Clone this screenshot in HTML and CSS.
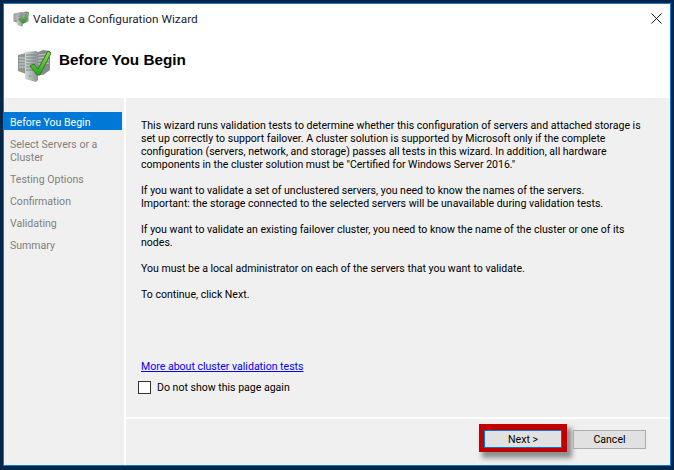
FILE: index.html
```html
<!DOCTYPE html>
<html lang="en">
<head>
<meta charset="utf-8">
<title>Validate a Configuration Wizard</title>
<link rel="stylesheet" href="styles.css">
</head>
<body>
<svg class="defs" width="0" height="0">
  <defs>
    <linearGradient id="chk" x1="0" y1="0" x2="0" y2="1"><stop offset="0" stop-color="#8ee04e"/><stop offset="1" stop-color="#2f9f22"/></linearGradient>
    <linearGradient id="tower" x1="0" y1="0" x2="1" y2="0"><stop offset="0" stop-color="#d2d6d6"/><stop offset="1" stop-color="#8b9191"/></linearGradient>
    <symbol id="servers" viewBox="0 0 34 32">
      <path d="M1 5l8-2v21l-8-3z" fill="#8f9595"/>
      <path d="M2 8h6M2 11h6M2 14h6M2 17h6" stroke="#cfd3d3" stroke-width="1.100"/>
      <path d="M19 3l7-3 7 1v19l-7 5-7-1z" fill="#868c8c"/>
      <path d="M21 5l11-1M21 8l11-1M21 11l11-1M21 14l11-1" stroke="#c5c9c9" stroke-width="1.100"/>
      <path d="M8 2l11-1 2 1v28l-2 2-11-3z" fill="url(#tower)"/>
      <path d="M9 5h10M9 8h10M9 11h10M9 14h10M9 17h10M9 20h10" stroke="#7b8181" stroke-width="1.100"/>
      <path d="M12 26h2M4 21h2" stroke="#57c23a" stroke-width="1.500"/>
      <path d="M13 16l4-2 4 5L31 1l3 2-11 22h-3z" fill="url(#chk)" stroke="#2c7d1e" stroke-width="1"/>
    </symbol>
  </defs>
</svg>
<div class="window">
  <div class="titlebar">
    <svg class="title-icon" width="16" height="16"><use href="#servers"/></svg>
    <span class="title-text">Validate a Configuration Wizard</span>
    <svg class="close" width="11" height="11" viewBox="0 0 11 11"><path d="M.5.5l10 10M10.500.5l-10 10" stroke="#1a1a1a" stroke-width="1" fill="none"/></svg>
  </div>
  <header class="banner">
    <svg class="banner-icon" width="34" height="32"><use href="#servers"/></svg>
    <h1 class="banner-title">Before You Begin</h1>
  </header>
  <div class="middle">
    <nav class="steps">
      <div class="step active">Before You Begin</div>
      <div class="step">Select Servers or a Cluster</div>
      <div class="step">Testing Options</div>
      <div class="step">Confirmation</div>
      <div class="step">Validating</div>
      <div class="step">Summary</div>
    </nav>
    <div class="panel">
      <main class="content">
        <div class="copy">
          <p>This wizard runs validation tests to determine whether this configuration of servers and attached storage is<br>set up correctly to support failover. A cluster solution is supported by Microsoft only if the complete<br>configuration (servers, network, and storage) passes all tests in this wizard. In addition, all hardware<br>components in the cluster solution must be "Certified for Windows Server 2016."</p>
          <p>If you want to validate a set of unclustered servers, you need to know the names of the servers.<br>Important: the storage connected to the selected servers will be unavailable during validation tests.</p>
          <p>If you want to validate an existing failover cluster, you need to know the name of the cluster or one of its<br>nodes.</p>
          <p>You must be a local administrator on each of the servers that you want to validate.</p>
          <p>To continue, click Next.</p>
        </div>
        <a class="more" href="#">More about cluster validation tests</a>
        <label class="check"><span class="box"></span>Do not show this page again</label>
      </main>
      <footer class="actions">
        <span class="highlight"><button class="btn next">Next &gt;</button></span>
        <button class="btn">Cancel</button>
      </footer>
    </div>
  </div>
</div>
</body>
</html>
```
FILE: styles.css
```css
html, body { margin: 0; padding: 0; }
body {
  width: 674px; height: 470px; overflow: hidden; box-sizing: border-box;
  background: #04264a; padding: 3px 3px 4px 3px;
  font-family: Roboto, "Open Sans", sans-serif; font-size: 10.550px; color: #000;
}
.defs { position: absolute; }
.window {
  height: 100%; box-sizing: border-box; border: 1px solid #1379c8; background: #fff;
  display: flex; flex-direction: column;
}
.titlebar { height: 29px; display: flex; align-items: center; padding: 0 8px 0 9px; flex: none; }
.title-icon { margin-right: 4px; }
.title-text { font-size: 11.800px; color: #1c2430; flex: 1; }
.banner { height: 65px; flex: none; display: flex; align-items: flex-start; padding-left: 13px; box-sizing: border-box; }
.banner-icon { margin-top: 17px; }
.banner-title { margin: 18px 0 0 8px; font: bold 15.300px "Liberation Sans", Arial, sans-serif; color: #000; }
.middle { flex: 1; display: flex; min-height: 0; }
.steps { width: 120px; background: #f0f0f0; flex: none; padding-top: 14px; box-sizing: border-box; margin-right: 2px; }
.step { padding: 5px 6px 4px; line-height: 13px; color: #808080; width: 118px; box-sizing: border-box; }
.step.active { background: #0078d7; color: #fff; height: 18px; padding: 4px 6px 2px; margin-bottom: 3px; }
.panel { flex: 1; display: flex; flex-direction: column; min-width: 0; }
.content { flex: 1; background: #f0f0f0; padding: 21px 15px 0 15px; display: flex; flex-direction: column; margin-bottom: 2px; }
.copy { flex: 1; line-height: 13px; }
.copy p { margin: 0 0 13px; white-space: nowrap; }
.more { color: #0000ff; text-decoration: underline; line-height: 13px; }
.check { display: flex; align-items: center; margin: 8px 0 23px -3px; line-height: 13px; }
.box { width: 11px; height: 11px; border: 1px solid #333; background: #fff; margin-right: 6px; }
.actions { height: 46px; background: #f0f0f0; flex: none; display: flex; justify-content: flex-end; align-items: flex-start; padding: 11px 24px 0 0; box-sizing: border-box; gap: 11px; }
.btn { width: 73px; height: 19px; background: #e1e1e1; border: 1px solid #adadad; font: inherit; color: #000; padding: 0; }
.highlight { display: block; border: solid #c00000; border-width: 6px 5px 4px; margin: -6px -5px -4px; box-shadow: 4px 5px 5px 1px rgba(60,60,60,.55); }
.next { display: block; width: 78px; height: 18px; border-color: #0078d7; }
```
